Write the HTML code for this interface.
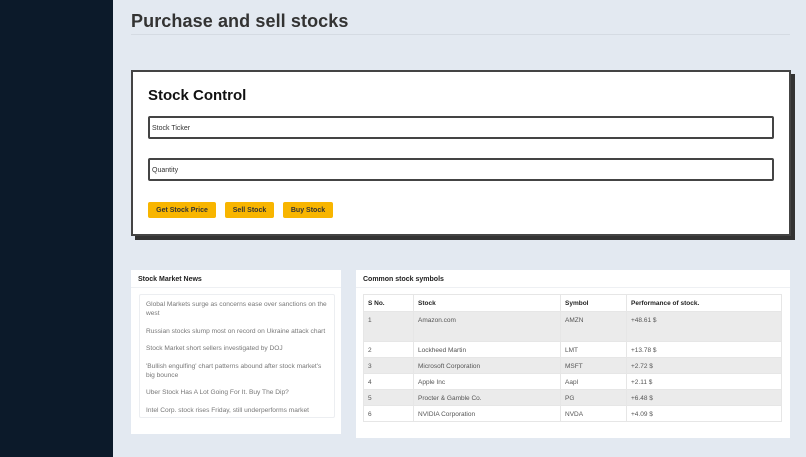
<!DOCTYPE html>
<html><head><style>
*{box-sizing:border-box;margin:0;padding:0}
body{width:806px;height:457px;background:#e3e9f1;font-family:"Liberation Sans",sans-serif;position:relative;overflow:hidden}
.side{position:absolute;left:0;top:0;width:113px;height:457px;background:#0c1a2a}
h1{position:absolute;left:131px;top:11px;font-size:18px;font-weight:bold;color:#333;letter-spacing:0.1px}
.hr{position:absolute;left:131px;top:34px;width:659px;height:1px;background:#d5dbe3}
.sc{position:absolute;left:131px;top:70px;width:660px;height:166px;background:#fff;border:2px solid #444;box-shadow:4px 4px 0 #333}
.sc h2{position:absolute;left:15px;top:15px;font-size:15px;font-weight:bold;color:#111}
.inp{position:absolute;left:15px;width:626px;height:23px;border:2px solid #444;border-radius:2px;font-size:7px;color:#333;padding:6px 2px;line-height:9px}
.btn{position:absolute;top:130px;height:16px;background:#f8b500;border-radius:2px;font-size:7px;font-weight:bold;color:#333;text-align:center;line-height:17px}
.card{position:absolute;background:#fff;top:270px}
.ch{height:18px;border-bottom:1px solid #eef0f3;font-size:7px;font-weight:bold;color:#222;padding:6px 7px}
.news{position:absolute;left:8px;top:24px;width:196px;height:124px;border:1px solid #eceef1;border-radius:2px;padding:5px 6px;font-size:6.6px;color:#777;line-height:9px}
.news p{margin-bottom:8.5px}
table{position:absolute;left:7px;top:24px;width:419px;border-collapse:collapse;font-size:6.5px;color:#555}
td,th{border:1px solid #e6e6e6;text-align:left;padding:0 4px;vertical-align:top}
th{height:17px;vertical-align:middle;color:#222;font-size:6.5px}
td{height:16px;padding-top:5px}
tr.g td{background:#ebebeb}
</style></head><body>
<div class="side"></div>
<h1>Purchase and sell stocks</h1>
<div class="hr"></div>
<div class="sc">
<h2>Stock Control</h2>
<div class="inp" style="top:44px">Stock Ticker</div>
<div class="inp" style="top:86px">Quantity</div>
<div class="btn" style="left:15px;width:68px">Get Stock Price</div>
<div class="btn" style="left:92px;width:49px">Sell Stock</div>
<div class="btn" style="left:150px;width:50px">Buy Stock</div>
</div>
<div class="card" style="left:131px;width:210px;height:164px">
<div class="ch">Stock Market News</div>
<div class="news">
<p>Global Markets surge as concerns ease over sanctions on the west</p>
<p>Russian stocks slump most on record on Ukraine attack chart</p>
<p>Stock Market short sellers investigated by DOJ</p>
<p>'Bullish engulfing' chart patterns abound after stock market's big bounce</p>
<p>Uber Stock Has A Lot Going For It. Buy The Dip?</p>
<p>Intel Corp. stock rises Friday, still underperforms market</p>
</div></div>
<div class="card" style="left:356px;width:434px;height:168px">
<div class="ch">Common stock symbols</div>
<table>
<tr><th style="width:50px">S No.</th><th style="width:147px">Stock</th><th style="width:66px">Symbol</th><th>Performance of stock.</th></tr>
<tr class="g"><td style="height:30px">1</td><td>Amazon.com</td><td>AMZN</td><td>+48.61 $</td></tr>
<tr><td>2</td><td>Lockheed Martin</td><td>LMT</td><td>+13.78 $</td></tr>
<tr class="g"><td>3</td><td>Microsoft Corporation</td><td>MSFT</td><td>+2.72 $</td></tr>
<tr><td>4</td><td>Apple Inc</td><td>Aapl</td><td>+2.11 $</td></tr>
<tr class="g"><td>5</td><td>Procter &amp; Gamble Co.</td><td>PG</td><td>+6.48 $</td></tr>
<tr><td>6</td><td>NVIDIA Corporation</td><td>NVDA</td><td>+4.09 $</td></tr>
</table></div>
</body></html>
